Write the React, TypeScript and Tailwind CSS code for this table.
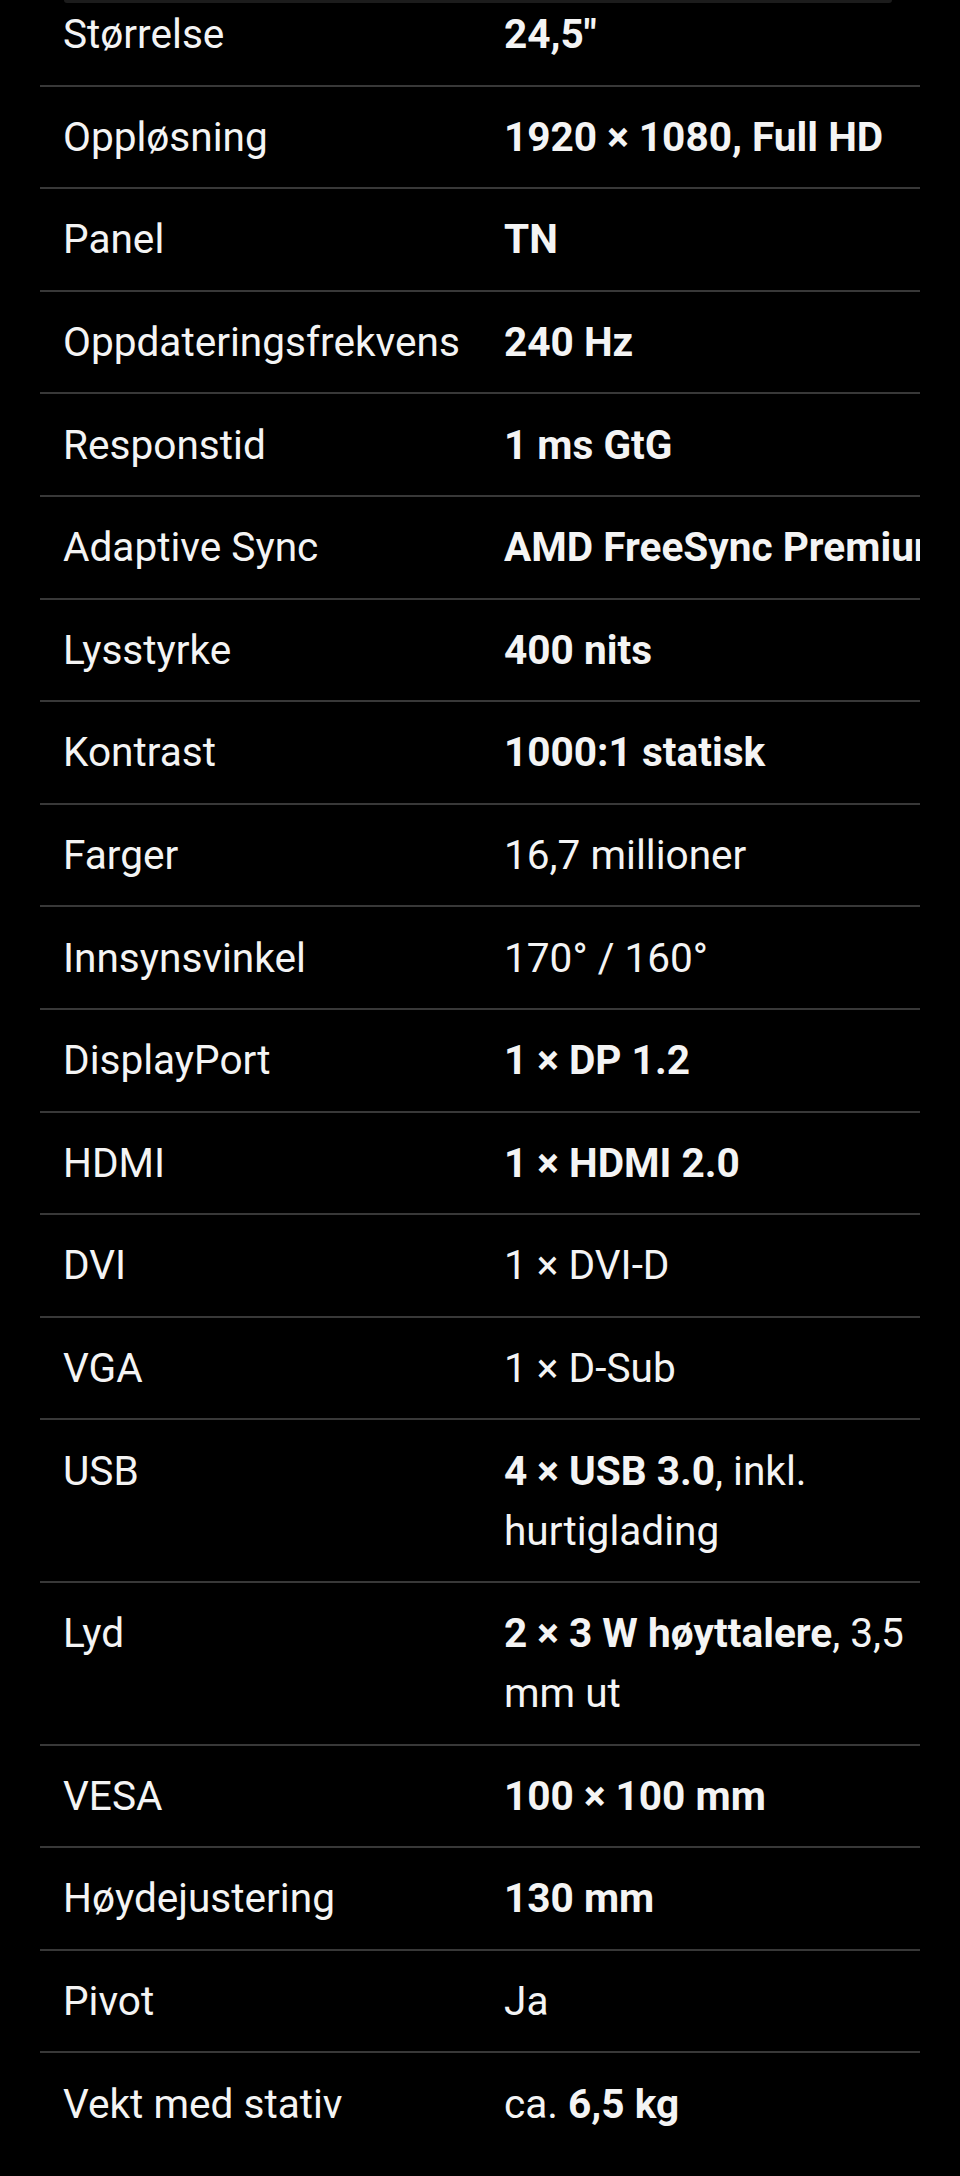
import React from "react";

type Spec = {
  label: string;
  value: React.ReactNode;
};

const specs: Spec[] = [
  { label: "Størrelse", value: <b>24,5"</b> },
  { label: "Oppløsning", value: <b>1920 × 1080, Full HD</b> },
  { label: "Panel", value: <b>TN</b> },
  { label: "Oppdateringsfrekvens", value: <b>240 Hz</b> },
  { label: "Responstid", value: <b>1 ms GtG</b> },
  { label: "Adaptive Sync", value: <b className="whitespace-nowrap">AMD FreeSync Premium</b> },
  { label: "Lysstyrke", value: <b>400 nits</b> },
  { label: "Kontrast", value: <b>1000:1 statisk</b> },
  { label: "Farger", value: "16,7 millioner" },
  { label: "Innsynsvinkel", value: "170° / 160°" },
  { label: "DisplayPort", value: <b>1 × DP 1.2</b> },
  { label: "HDMI", value: <b>1 × HDMI 2.0</b> },
  { label: "DVI", value: "1 × DVI-D" },
  { label: "VGA", value: "1 × D-Sub" },
  {
    label: "USB",
    value: (
      <>
        <b>4 × USB 3.0</b>, inkl. hurtiglading
      </>
    ),
  },
  {
    label: "Lyd",
    value: (
      <>
        <b>2 × 3 W høyttalere</b>, 3,5 mm ut
      </>
    ),
  },
  { label: "VESA", value: <b>100 × 100 mm</b> },
  { label: "Høydejustering", value: <b>130 mm</b> },
  { label: "Pivot", value: "Ja" },
  {
    label: "Vekt med stativ",
    value: (
      <>
        ca. <b>6,5 kg</b>
      </>
    ),
  },
];

export default function App() {
  return (
    <div
      className="relative min-h-[2176px] w-[960px] overflow-hidden bg-black text-[#f4f4f4]"
      style={{ fontFamily: "Roboto, 'Noto Sans', sans-serif" }}
    >
      {/* bottom edge of the sticky bar above the table */}
      <div className="absolute left-[64px] top-0 h-[3px] w-[828px] rounded-b-[3px] bg-[#1c1c1c]" />

      <div className="mx-[40px] -mt-[16px] w-[880px] overflow-hidden">
        <div className="w-[901px]">
          {specs.map((s) => (
            <div
              key={s.label}
              className="grid grid-cols-[441px_460px] border-b-2 border-[#383838] text-[40.6px] leading-[60px] last:border-b-0"
            >
              <div className="pl-[23px] py-[20.3px] font-normal whitespace-nowrap">{s.label}</div>
              <div className="pl-[23px] py-[20.3px] [&_b]:font-bold">{s.value}</div>
            </div>
          ))}
        </div>
      </div>
    </div>
  );
}
